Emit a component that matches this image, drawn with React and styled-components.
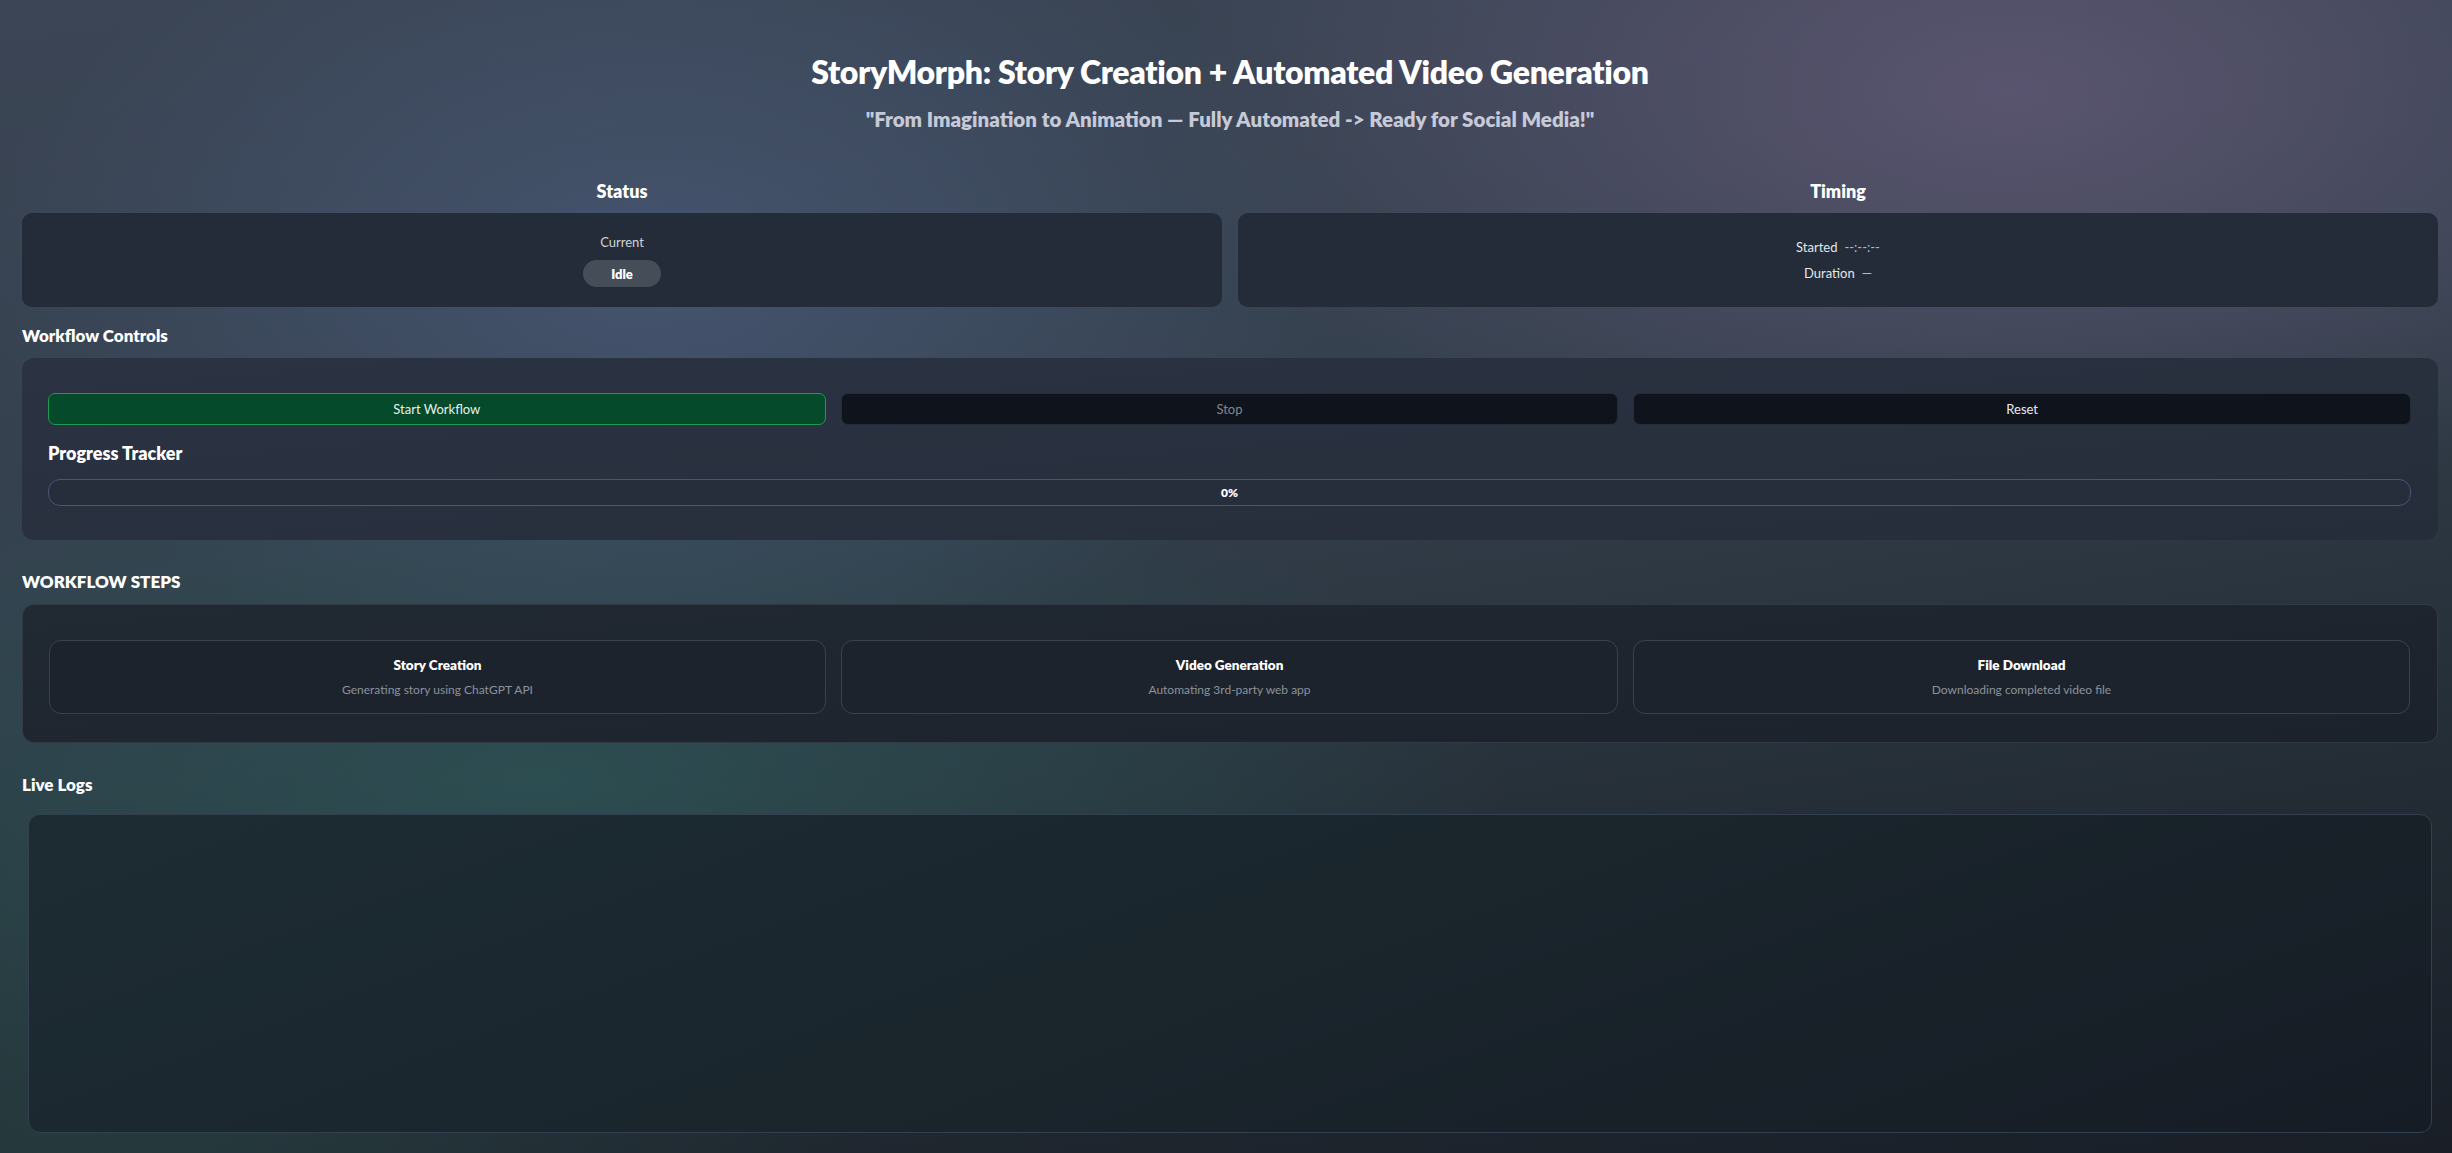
import React from "react";
import styled, { createGlobalStyle } from "styled-components";

const GlobalStyle = createGlobalStyle`
  html, body {
    margin: 0;
    padding: 0;
    background: #1b222b;
  }
  * {
    box-sizing: border-box;
  }
`;

const steps = [
  { title: "Story Creation", desc: "Generating story using ChatGPT API" },
  { title: "Video Generation", desc: "Automating 3rd-party web app" },
  { title: "File Download", desc: "Downloading completed video file" },
];

const App = () => {
  const progress = 0;

  return (
    <Page>
      <GlobalStyle />
      <Header>
        <Title>StoryMorph: Story Creation + Automated Video Generation</Title>
        <Tagline>
          "From Imagination to Animation — Fully Automated -&gt; Ready for Social Media!"
        </Tagline>
      </Header>

      <TopGrid>
        <Column>
          <ColumnLabel>Status</ColumnLabel>
          <InfoCard>
            <SmallText>Current</SmallText>
            <StatusPill>Idle</StatusPill>
          </InfoCard>
        </Column>
        <Column>
          <ColumnLabel>Timing</ColumnLabel>
          <InfoCard $gap={8}>
            <TimeRow>
              <span>Started</span>
              <TimeValue>--:--:--</TimeValue>
            </TimeRow>
            <TimeRow>
              <span>Duration</span>
              <TimeValue>—</TimeValue>
            </TimeRow>
          </InfoCard>
        </Column>
      </TopGrid>

      <SectionTitle>Workflow Controls</SectionTitle>
      <ControlsPanel>
        <ButtonRow>
          <ActionButton $variant="primary">Start Workflow</ActionButton>
          <ActionButton $variant="muted">Stop</ActionButton>
          <ActionButton>Reset</ActionButton>
        </ButtonRow>
        <SubTitle>Progress Tracker</SubTitle>
        <ProgressBar>
          <ProgressFill style={{ width: `${progress}%` }} />
          <ProgressLabel>{progress}%</ProgressLabel>
        </ProgressBar>
      </ControlsPanel>

      <SectionTitle $space={30}>WORKFLOW STEPS</SectionTitle>
      <StepsPanel>
        <StepGrid>
          {steps.map((s) => (
            <StepBox key={s.title}>
              <StepTitle>{s.title}</StepTitle>
              <StepDesc>{s.desc}</StepDesc>
            </StepBox>
          ))}
        </StepGrid>
      </StepsPanel>

      <SectionTitle $space={30}>Live Logs</SectionTitle>
      <LogBox />
    </Page>
  );
};

export default App;

const Page = styled.div`
  min-height: 100vh;
  padding: 0 14px 22px 22px;
  font-family: Lato, "Noto Sans", "Liberation Sans", sans-serif;
  color: #ffffff;
  background:
    radial-gradient(ellipse 40% 50% at 27% 24%, rgba(82, 102, 140, 0.5), transparent 70%),
    radial-gradient(ellipse 48% 52% at 82% 8%, rgba(104, 92, 124, 0.7), transparent 72%),
    radial-gradient(ellipse 55% 42% at 22% 68%, rgba(44, 90, 90, 0.65), transparent 72%),
    radial-gradient(ellipse 40% 40% at 5% 95%, rgba(40, 70, 70, 0.6), transparent 75%),
    linear-gradient(172deg, #3b4555 0%, #34404d 40%, #232c34 75%, #191e27 100%);
`;

const Header = styled.header`
  padding-top: 53px;
  text-align: center;
`;

const Title = styled.h1`
  margin: 0;
  font-size: 32px;
  line-height: 38px;
  font-weight: 800;
  letter-spacing: -0.3px;
`;

const Tagline = styled.p`
  margin: 16px 0 0;
  font-size: 20.5px;
  line-height: 24px;
  font-weight: 800;
  color: #c6cad8;
`;

const TopGrid = styled.div`
  margin-top: 48px;
  display: grid;
  grid-template-columns: 1fr 1fr;
  gap: 16px;
`;

const Column = styled.div`
  display: flex;
  flex-direction: column;
  gap: 10px;
`;

const ColumnLabel = styled.div`
  text-align: center;
  font-size: 18px;
  line-height: 24px;
  font-weight: 800;
`;

const InfoCard = styled.div`
  height: 94px;
  display: flex;
  flex-direction: column;
  align-items: center;
  justify-content: center;
  gap: ${(p) => p.$gap ?? 9}px;
  background: #242c39;
  border-radius: 10px;
`;

const SmallText = styled.div`
  font-size: 13px;
  line-height: 18px;
  color: #d0d4da;
`;

const StatusPill = styled.div`
  width: 78px;
  height: 27px;
  border-radius: 14px;
  background: #454d59;
  display: flex;
  align-items: center;
  justify-content: center;
  font-size: 13px;
  font-weight: 800;
`;

const TimeRow = styled.div`
  display: flex;
  gap: 7px;
  font-size: 13px;
  line-height: 18px;
  color: #e2e6ec;
`;

const TimeValue = styled.span`
  color: #b4bac4;
`;

const SectionTitle = styled.h3`
  margin: ${(p) => p.$space ?? 17}px 0 10px;
  font-size: 17px;
  line-height: 24px;
  font-weight: 800;
`;

const ControlsPanel = styled.div`
  padding: 35px 27px 34px 26px;
  border-radius: 12px;
  background: linear-gradient(175deg, #2b3242 0%, #262d3a 100%);
`;

const ButtonRow = styled.div`
  display: grid;
  grid-template-columns: repeat(3, 1fr);
  gap: 15px;
`;

const ActionButton = styled.button`
  height: 32px;
  border-radius: 7px;
  font-family: inherit;
  font-size: 13px;
  cursor: pointer;
  border: 1px solid
    ${(p) => (p.$variant === "primary" ? "#1f9a52" : "#262c36")};
  background: ${(p) => (p.$variant === "primary" ? "#044a2b" : "#0f141c")};
  color: ${(p) =>
    p.$variant === "primary"
      ? "#e8f2ec"
      : p.$variant === "muted"
      ? "#80868f"
      : "#e8eaf0"};
`;

const SubTitle = styled.h4`
  margin: 16px 0 14px;
  font-size: 18px;
  line-height: 24px;
  font-weight: 800;
`;

const ProgressBar = styled.div`
  position: relative;
  height: 27px;
  border: 1.5px solid #4a5674;
  border-radius: 12px;
  background: #262d3b;
  overflow: hidden;
  display: flex;
  align-items: center;
  justify-content: center;
`;

const ProgressFill = styled.div`
  position: absolute;
  left: 0;
  top: 0;
  bottom: 0;
  background: #1f9a52;
`;

const ProgressLabel = styled.span`
  position: relative;
  font-size: 12px;
  font-weight: 800;
`;

const StepsPanel = styled.div`
  padding: 35px 27px 28px 26px;
  border-radius: 12px;
  border: 1px solid #303a46;
  background: linear-gradient(175deg, #212933 0%, #1c222c 100%);
`;

const StepGrid = styled.div`
  display: grid;
  grid-template-columns: repeat(3, 1fr);
  gap: 15px;
`;

const StepBox = styled.div`
  height: 74px;
  padding-top: 14px;
  border: 1px solid #38424e;
  border-radius: 12px;
  background: #1d232c;
  text-align: center;
`;

const StepTitle = styled.div`
  font-size: 13.5px;
  line-height: 20px;
  font-weight: 800;
`;

const StepDesc = styled.div`
  margin-top: 6px;
  font-size: 12px;
  line-height: 18px;
  color: #8b929c;
`;

const LogBox = styled.div`
  margin: 17px 6px 0;
  height: 319px;
  border: 1px solid #334050;
  border-radius: 12px;
  background: linear-gradient(160deg, #1d2c33 0%, #1a252c 50%, #161c25 100%);
`;
